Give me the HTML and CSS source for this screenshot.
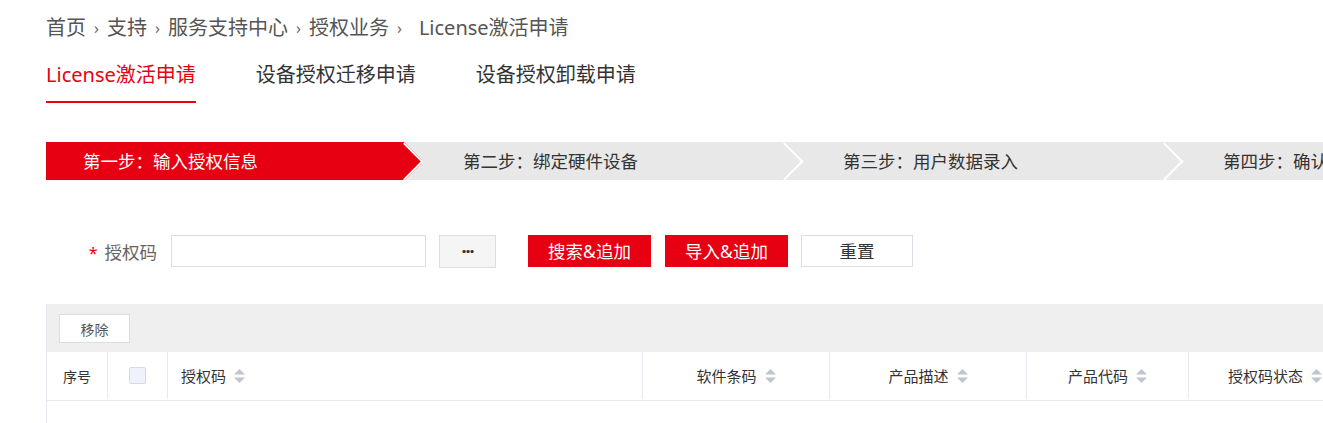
FILE: index.html
```html
<!DOCTYPE html>
<html lang="zh-CN">
<head>
<meta charset="utf-8">
<title>License激活申请</title>
<link rel="stylesheet" href="styles.css">
</head>
<body>
<div class="page">
  <nav class="breadcrumb">
    <span>首页</span><span class="sep">›</span><span>支持</span><span class="sep">›</span><span>服务支持中心</span><span class="sep">›</span><span>授权业务</span><span class="sep sep-last">›</span><span>License激活申请</span>
  </nav>

  <div class="tabs">
    <div class="tab active">License激活申请</div>
    <div class="tab">设备授权迁移申请</div>
    <div class="tab">设备授权卸载申请</div>
  </div>

  <div class="steps">
    <div class="step step-1 active">第一步：输入授权信息</div>
    <div class="step step-2">第二步：绑定硬件设备</div>
    <div class="step step-3">第三步：用户数据录入</div>
    <div class="step step-4">第四步：确认提交</div>
  </div>

  <div class="form-row">
    <label class="label"><span class="req">*</span>授权码</label>
    <input class="input" type="text">
    <button class="btn btn-dots">&middot;&middot;&middot;</button>
    <button class="btn btn-red btn-search">搜索&amp;追加</button>
    <button class="btn btn-red">导入&amp;追加</button>
    <button class="btn btn-plain">重置</button>
  </div>

  <div class="table">
    <div class="toolbar">
      <button class="btn-remove">移除</button>
    </div>
    <div class="thead">
      <div class="th c-no center">序号</div>
      <div class="th c-check center"><span class="checkbox"></span></div>
      <div class="th c-code">授权码<svg class="sort" viewBox="0 0 11 14" width="11" height="14"><path d="M5.5 0L11 5.5H0Z" /><path d="M5.5 14L11 8.5H0Z" /></svg></div>
      <div class="th c-sw center">软件条码<svg class="sort" viewBox="0 0 11 14" width="11" height="14"><path d="M5.5 0L11 5.5H0Z" /><path d="M5.5 14L11 8.5H0Z" /></svg></div>
      <div class="th c-desc center">产品描述<svg class="sort" viewBox="0 0 11 14" width="11" height="14"><path d="M5.5 0L11 5.5H0Z" /><path d="M5.5 14L11 8.5H0Z" /></svg></div>
      <div class="th c-pcode center">产品代码<svg class="sort" viewBox="0 0 11 14" width="11" height="14"><path d="M5.5 0L11 5.5H0Z" /><path d="M5.5 14L11 8.5H0Z" /></svg></div>
      <div class="th c-status center">授权码状态<svg class="sort" viewBox="0 0 11 14" width="11" height="14"><path d="M5.5 0L11 5.5H0Z" /><path d="M5.5 14L11 8.5H0Z" /></svg></div>
    </div>
    <div class="tbody"></div>
  </div>
</div>
</body>
</html>
```

FILE: styles.css
```css
html, body {
  margin: 0;
  padding: 0;
  overflow: hidden;
  background: #fff;
}

body {
  font-family: "Noto Sans", "Noto Sans CJK SC", sans-serif;
  color: #333;
}

.page {
  width: 1640px;
  padding-left: 46px;
}

/* breadcrumb */
.breadcrumb {
  margin-top: 13px;
  height: 30px;
  line-height: 30px;
  font-size: 20px;
  color: #555;
  display: flex;
  white-space: nowrap;
}

.breadcrumb .sep {
  font-size: 16px;
  margin: 0 8px;
  color: #666;
}

.breadcrumb .sep-last {
  margin-right: 17px;
}

/* tabs */
.tabs {
  display: flex;
  gap: 60px;
  margin-top: 17px;
}

.tab {
  font-size: 20px;
  line-height: 30px;
  padding-bottom: 11px;
  border-bottom: 2px solid transparent;
  color: #333;
  white-space: nowrap;
}

.tab.active {
  color: #e60012;
  border-bottom-color: #e60012;
}

/* steps */
.steps {
  margin-top: 39px;
  display: flex;
  height: 38px;
  background: #e8e8e8;
  overflow: hidden;
}

.step {
  position: relative;
  flex: none;
  width: 380px;
  box-sizing: border-box;
  padding-left: 59px;
  height: 38px;
  line-height: 38px;
  font-size: 17.5px;
  color: #333;
  background: #e8e8e8;
  white-space: nowrap;
}

.step::after {
  content: "";
  position: absolute;
  top: 5.5px;
  right: -13.5px;
  width: 27px;
  height: 27px;
  box-sizing: border-box;
  background: inherit;
  border-top: 2px solid #fff;
  border-right: 2px solid #fff;
  transform: rotate(45deg);
}

.step-1 { z-index: 4; width: 358px; padding-left: 37px; }
.step-2 { z-index: 3; }
.step-3 { z-index: 2; }
.step-4 { z-index: 1; }

.step.active {
  background: #e60012;
  color: #fff;
}

/* form */
.form-row {
  margin-top: 55px;
  display: flex;
  align-items: center;
  height: 32px;
}

.label {
  width: 111px;
  text-align: right;
  margin-right: 14px;
  font-size: 17.5px;
  color: #666;
  white-space: nowrap;
}

.label .req {
  color: #e60012;
  font-size: 16px;
  margin-right: 7px;
}

.input {
  width: 255px;
  height: 32px;
  box-sizing: border-box;
  border: 1px solid #dcdde3;
  margin: 0;
  padding: 0 8px;
  outline: none;
}

.btn {
  height: 32px;
  box-sizing: border-box;
  font-family: inherit;
  font-size: 17.5px;
  line-height: 30px;
  padding: 0;
  margin: 0;
  cursor: pointer;
}

.btn-dots {
  margin-left: 13px;
  width: 57px;
  height: 33px;
  background: #f5f5f5;
  border: 1px solid #dcdde3;
  color: #333;
  font-size: 18px;
  font-weight: bold;
  letter-spacing: -1px;
}

.btn-red {
  width: 123px;
  background: #e60012;
  border: 1px solid #e60012;
  color: #fff;
  margin-left: 14px;
}

.btn-search {
  margin-left: 32px;
}

.btn-plain {
  width: 112px;
  margin-left: 13px;
  background: #fff;
  border: 1px solid #dcdde3;
  color: #333;
}

/* table */
.table {
  margin-top: 37px;
  border-left: 1px solid #e8eaf0;
}

.toolbar {
  height: 48px;
  background: #efefef;
  display: flex;
  align-items: center;
  padding-left: 12px;
}

.btn-remove {
  width: 71px;
  height: 29px;
  margin-top: 1px;
  background: #fff;
  border: 1px solid #dcdde3;
  font-family: inherit;
  font-size: 14px;
  color: #555;
  padding: 0;
}

.thead {
  display: flex;
  height: 48px;
  border-bottom: 1px solid #e8eaf0;
  background: #fff;
}

.th {
  flex: none;
  box-sizing: border-box;
  height: 47px;
  display: flex;
  align-items: center;
  font-size: 15px;
  color: #333;
  border-right: 1px solid #e8eaf0;
  white-space: nowrap;
}

.th.center {
  justify-content: center;
}

.c-no { width: 61px; font-size: 14px; }
.c-check { width: 60px; }
.c-code { width: 475px; padding-left: 13px; }
.c-sw { width: 187px; }
.c-desc { width: 197px; }
.c-pcode { width: 162px; }
.c-status { width: 220px; justify-content: flex-start !important; padding-left: 39px; }

.checkbox {
  width: 17px;
  height: 17px;
  box-sizing: border-box;
  border: 1px solid #d5d9e6;
  border-radius: 2px;
  background: #eff2fa;
}

.sort {
  margin-left: 8px;
  fill: #c0c4cc;
}

.tbody {
  height: 22px;
}
```
